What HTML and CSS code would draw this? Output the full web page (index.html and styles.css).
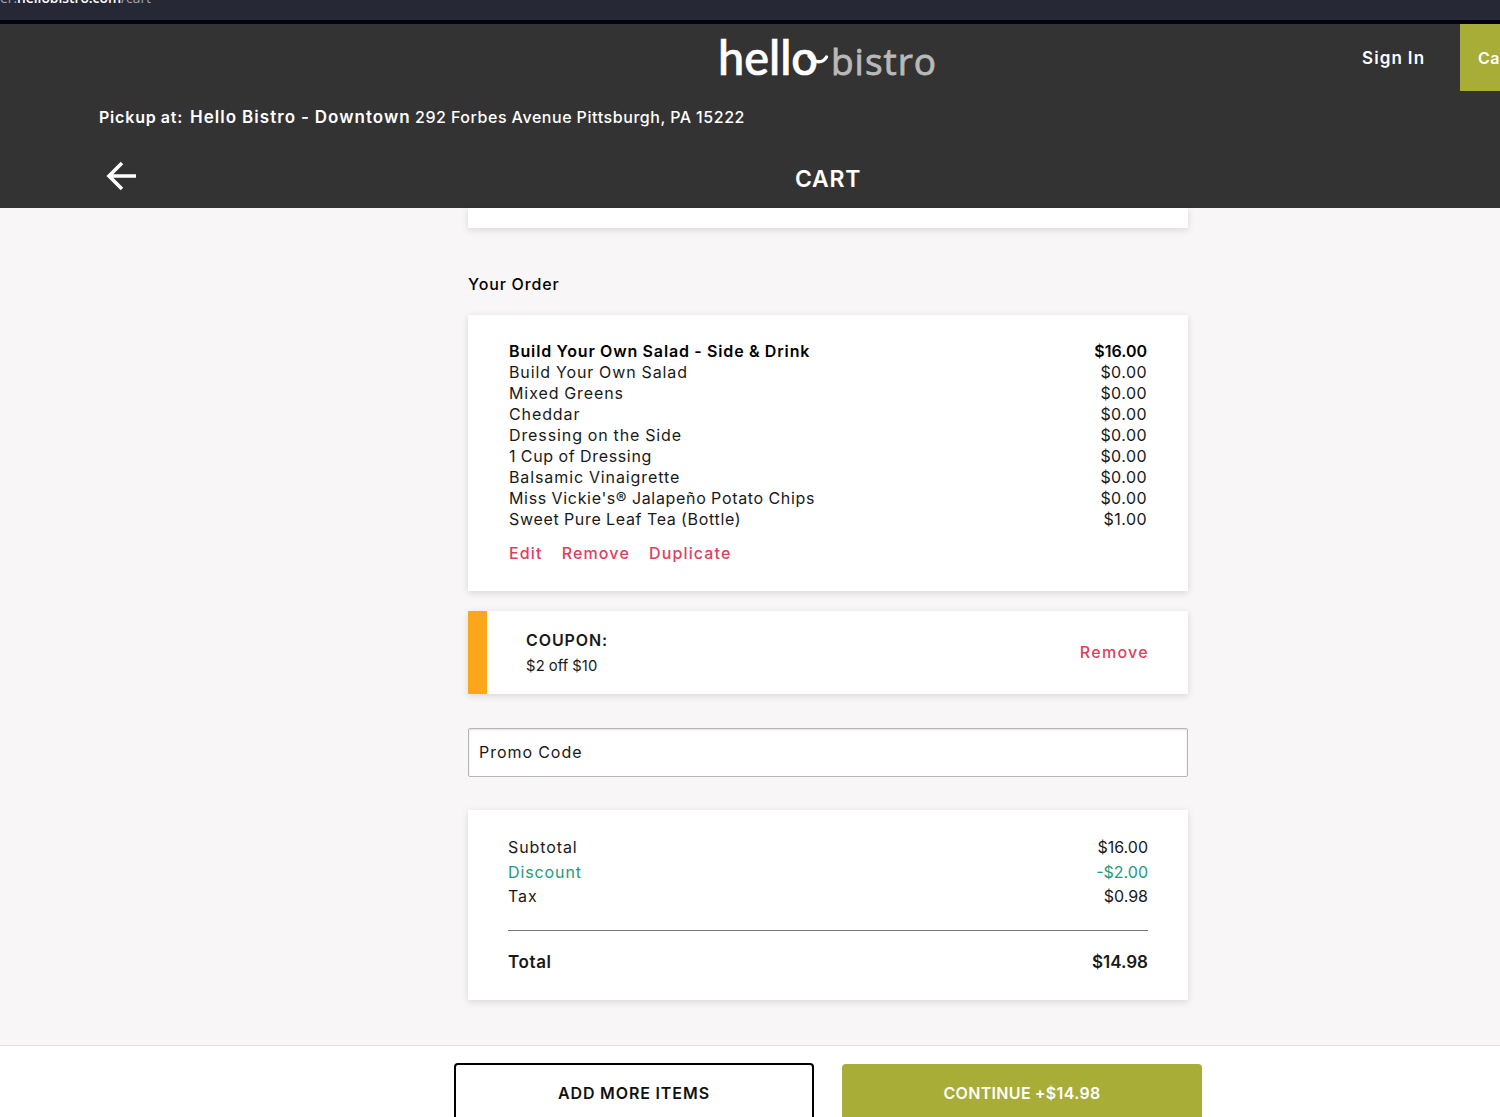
FILE: index.html
```html
<!DOCTYPE html>
<html lang="en">
<head>
<meta charset="UTF-8">
<meta name="viewport" content="width=device-width,initial-scale=1.0">
<title>Cart | Hello Bistro</title>
<link rel="stylesheet" href="styles.css">
</head>

<body>
<div class="page">

  <!-- Address bar -->
  <div class="urlbar"><span class="sub">er.</span><span class="host">hellobistro.com</span><span class="path">/cart</span></div>

  <!-- Header -->
  <header class="header">
    <div class="topbar">
      <a class="logo" href="#" aria-label="hello bistro">
        <svg width="216" height="44" viewBox="0 0 216 44">
          <text class="logo-hello" x="-2" y="38" textLength="100" lengthAdjust="spacingAndGlyphs">hello</text>
          <path class="logo-tail" d="M89 19C95 27 103 26 106.500 20"/>
          <text class="logo-bistro" x="111" y="38" textLength="105" lengthAdjust="spacing">bistro</text>
        </svg>
      </a>
      <a class="signin" href="#">Sign In</a>
      <a class="cart-btn" href="#">Cart</a>
    </div>

    <div class="pickup">
      <span class="label">Pickup at:</span>
      <strong>Hello Bistro - Downtown</strong>
      <span class="address">292 Forbes Avenue Pittsburgh, PA 15222</span>
    </div>

    <div class="titlebar">
      <a class="back" href="#" aria-label="Back">
        <svg width="30" height="30" viewBox="0 0 30 30"><path d="M30 15H3M16 2L3 15L16 28"/></svg>
      </a>
      <h1>CART</h1>
    </div>
  </header>

  <main class="container">
    <div class="card card-prev"></div>

    <h2>Your Order</h2>

    <section class="card order">
      <div class="row item"><span>Build Your Own Salad - Side &amp; Drink</span><span class="price">$16.00</span></div>
      <div class="row"><span>Build Your Own Salad</span><span class="price">$0.00</span></div>
      <div class="row"><span>Mixed Greens</span><span class="price">$0.00</span></div>
      <div class="row"><span>Cheddar</span><span class="price">$0.00</span></div>
      <div class="row"><span>Dressing on the Side</span><span class="price">$0.00</span></div>
      <div class="row tight"><span>1 Cup of Dressing</span><span class="price">$0.00</span></div>
      <div class="row"><span>Balsamic Vinaigrette</span><span class="price">$0.00</span></div>
      <div class="row tight"><span>Miss Vickie's® Jalapeño Potato Chips</span><span class="price">$0.00</span></div>
      <div class="row tight"><span>Sweet Pure Leaf Tea (Bottle)</span><span class="price">$1.00</span></div>
      <div class="actions">
        <a href="#">Edit</a>
        <a href="#">Remove</a>
        <a href="#">Duplicate</a>
      </div>
    </section>

    <section class="card coupon">
      <div>
        <div class="coupon-title">COUPON:</div>
        <div class="coupon-text">$2 off $10</div>
      </div>
      <a href="#">Remove</a>
    </section>

    <input class="promo" type="text" placeholder="Promo Code">

    <section class="card totals">
      <div class="row"><span>Subtotal</span><span class="price">$16.00</span></div>
      <div class="row discount"><span>Discount</span><span class="price">-$2.00</span></div>
      <div class="row"><span>Tax</span><span class="price">$0.98</span></div>
      <div class="row total"><span>Total</span><span class="price">$14.98</span></div>
    </section>
  </main>

  <!-- Bottom buttons -->
  <footer class="footer">
    <a class="btn btn-outline" href="#">ADD MORE ITEMS</a>
    <a class="btn btn-primary" href="#">CONTINUE +$14.98</a>
  </footer>

</div>
</body>
</html>
```
FILE: styles.css
```css
:root{
  --dark   : #333333;
  --bg     : #f8f6f7;
  --olive  : #a8ad37;
  --pink   : #e0405f;
  --green  : #249a78;
  --orange : #fca61c;
  --text   : #191919;
}
*{box-sizing:border-box;}
html,body{margin:0;height:100%;overflow:hidden;}
body{
  font-family:Inter,"Liberation Sans",sans-serif;font-size:16px;letter-spacing:.9px;word-spacing:-.5px;
  color:var(--text);background:var(--bg);
}
a{color:inherit;text-decoration:none;}

/* wider than the window, the right side runs off screen */
.page{width:1656px;height:1117px;display:flex;flex-direction:column;overflow:hidden;}

.urlbar{
  height:24px;flex:none;display:flex;align-items:flex-end;padding-bottom:13px;overflow:hidden;
  background:#262835;border-bottom:4px solid #030312;
  font:13.8px/18px "Open Sans",sans-serif;letter-spacing:0;color:#a3a5b0;
}
.urlbar .host{color:#fff;font-weight:600;}

.header{height:184px;flex:none;background:var(--dark);color:#fff;}
.topbar{height:67px;display:flex;align-items:stretch;}
.logo{margin-left:720px;width:216px;padding-top:13px;}
.logo svg{display:block;overflow:visible;}
.logo-hello{font:500 48px Lato,sans-serif;letter-spacing:0;fill:#fff;stroke:#fff;stroke-width:.7px;}
.logo-bistro{font:400 37px "Open Sans",sans-serif;letter-spacing:0;fill:#b9b9b9;stroke:#b9b9b9;stroke-width:.8px;}
.logo-tail{fill:none;stroke:#fff;stroke-width:3.4px;stroke-linecap:round;}
.signin{margin-left:426px;width:98px;font-size:17px;font-weight:600;line-height:68px;letter-spacing:1.1px;}
.cart-btn{flex:1;padding-left:18px;background:var(--olive);font-weight:600;line-height:68px;letter-spacing:.4px;}

.pickup{display:flex;align-items:baseline;padding:14px 0 0 99px;line-height:25px;white-space:nowrap;}
.pickup .label{width:91px;font-weight:600;letter-spacing:.8px;}
.pickup strong{width:225px;font-size:17px;font-weight:600;letter-spacing:1.05px;}
.pickup .address{font-weight:500;letter-spacing:.58px;}

.titlebar{display:flex;align-items:center;margin-top:22px;padding-left:106px;height:48px;}
.back{width:689px;height:30px;}
.back svg{display:block;fill:none;stroke:#fff;stroke-width:3.6px;}
.titlebar h1{margin:5px 0 0;font-size:23px;font-weight:600;line-height:30px;letter-spacing:.7px;}

.container{width:720px;flex:1;margin:0 auto;}
.card{background:#fff;box-shadow:0 2px 7px rgba(0,0,0,.13);}
.card-prev{height:20px;}
h2{margin:44px 0 0;font-size:16px;font-weight:500;line-height:24px;color:#000;}

.row{display:flex;justify-content:space-between;line-height:21px;}
.tight{letter-spacing:.67px;}
.price{letter-spacing:.45px;}

.order{height:276px;margin-top:19px;padding:26px 41px 0;}
.item{font-weight:600;letter-spacing:.87px;color:#000;}
.item .price{letter-spacing:0;}
.actions{display:flex;gap:19px;margin-top:11px;line-height:24px;font-weight:500;letter-spacing:1.15px;color:var(--pink);}

.coupon{
  height:83px;margin-top:20px;padding:0 39px;border-left:19px solid var(--orange);
  display:flex;align-items:center;justify-content:space-between;line-height:26px;
}
.coupon > div{padding-top:1px;}
.coupon-title{font-weight:600;}
.coupon-text{font-size:14.8px;letter-spacing:.15px;}
.coupon a{margin-bottom:2px;font-weight:500;color:var(--pink);letter-spacing:1.3px;}

.promo{
  display:block;width:720px;height:49px;margin:34px 0 33px;padding:0 10px 2px;
  border:1px solid #b5b5b8;border-radius:2px;box-shadow:inset 0 1px 2px rgba(0,0,0,.12);
  font:inherit;letter-spacing:1px;word-spacing:inherit;background:#fff;
}
.promo::placeholder{color:var(--text);opacity:1;}

.totals{height:190px;padding:25px 40px 0;}
.totals .row{line-height:24.5px;}
.totals .price{letter-spacing:0;}
.discount{color:var(--green);}
.totals .total{
  margin-top:21px;padding-top:19px;border-top:1px solid #777;
  font-size:17px;font-weight:600;letter-spacing:.6px;
}

.footer{
  height:72px;flex:none;display:flex;justify-content:center;gap:28px;
  padding-top:17px;background:#fff;border-top:1px solid #dedede;
}
.btn{width:360px;height:60px;border-radius:4px;text-align:center;font-weight:600;}
.btn-outline{border:2px solid #000;line-height:56px;color:#111;letter-spacing:.95px;}
.btn-primary{margin-top:1px;background:var(--olive);color:#fff;line-height:59px;letter-spacing:.33px;}
```
